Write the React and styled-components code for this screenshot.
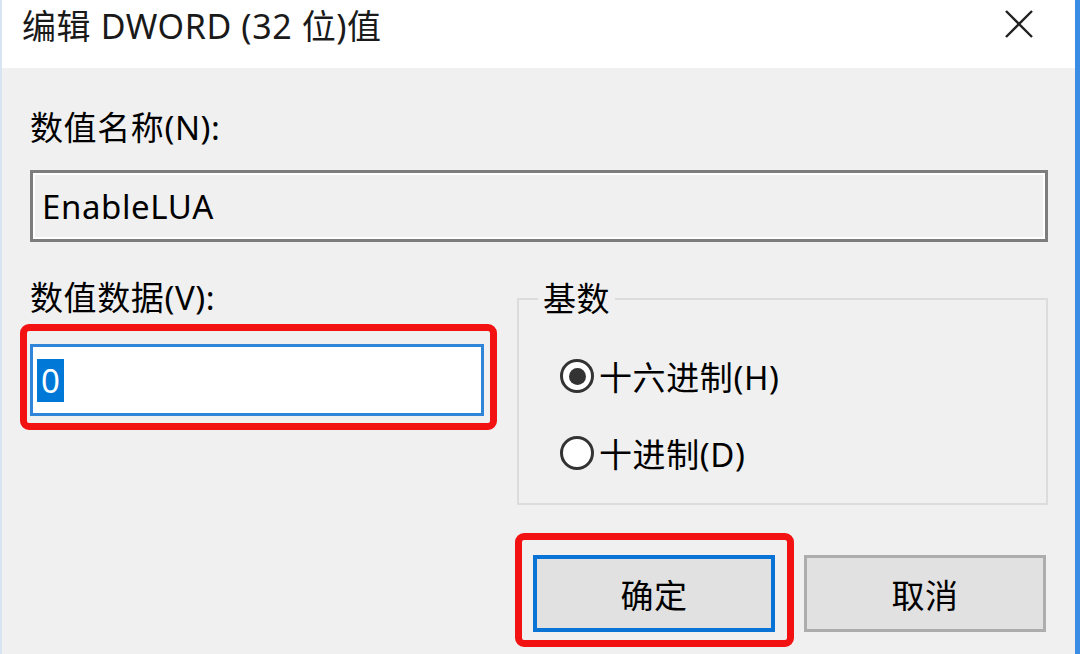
import React from 'react';
import styled, { createGlobalStyle } from 'styled-components';

const GlobalStyle = createGlobalStyle`
  html, body {
    margin: 0;
    padding: 0;
    background: #f0f0f0;
    overflow: hidden;
  }
  * {
    box-sizing: border-box;
  }
`;

const Window = styled.div`
  width: 1080px;
  height: 654px;
  display: flex;
  flex-direction: column;
  border-left: 2px solid #d6e4f3;
  border-right: 5px solid #3a8ce4;
  font-family: "Noto Sans", "Noto Sans CJK SC", sans-serif;
  letter-spacing: 0.6px;
  color: #000;
`;

const TitleBar = styled.div`
  height: 68px;
  flex: none;
  background: #fff;
  display: flex;
  align-items: flex-start;
  justify-content: space-between;
  padding: 5px 42px 0 20px;
`;

const Title = styled.div`
  font-size: 34px;
  line-height: 42px;
  color: #1a1a1a;
`;

const CloseIcon = styled.svg`
  margin-top: 5px;
  width: 28px;
  height: 28px;
`;

const Body = styled.div`
  flex: 1;
  background: #f0f0f0;
  padding: 39px 27px 0 28px;
  display: flex;
  flex-direction: column;
`;

const Label = styled.div`
  font-size: 33px;
  line-height: 41px;
  white-space: nowrap;
`;

const NameBox = styled.div`
  margin-top: 22px;
  height: 72px;
  border: 3px solid #7d7d7d;
  box-shadow: inset 0 0 0 2px #fff;
  background: #f0f0f0;
  display: flex;
  align-items: center;
  padding-left: 9px;
  font-size: 33px;
`;

const Row = styled.div`
  margin-top: 35px;
  display: grid;
  grid-template-columns: 454px 531px;
  column-gap: 33px;
`;

const LeftCol = styled.div`
  display: flex;
  flex-direction: column;
`;

const Highlight = styled.div`
  border: 7px solid #f21212;
  border-radius: 9px;
  padding: ${p => p.$pad};
  margin: ${p => p.$margin};
`;

const ValueInput = styled.div`
  height: 72px;
  border: 3px solid #2f86d8;
  background: #fff;
  display: flex;
  align-items: center;
  padding-left: 4px;
  font-size: 33px;
`;

const Selected = styled.span`
  background: #0078d7;
  color: #fff;
  line-height: 43px;
  padding: 0 4px;
`;

const Group = styled.fieldset`
  margin: 0;
  min-width: 0;
  border: 2px solid #dcdcdc;
  padding: 33px 0 28px 41px;
  display: flex;
  flex-direction: column;
  gap: 33px;
`;

const Legend = styled.legend`
  margin-left: -22px;
  padding: 0 5px;
  font-size: 33px;
  line-height: 44px;
`;

const RadioRow = styled.label`
  display: flex;
  align-items: center;
  height: 44px;
  gap: 5px;
  font-size: 33px;
`;

const RadioCircle = styled.span`
  flex: none;
  width: 34px;
  height: 34px;
  border-radius: 50%;
  border: 3px solid #333;
  background: #fff;
  display: flex;
  align-items: center;
  justify-content: center;

  &::after {
    content: "";
    width: 17px;
    height: 17px;
    border-radius: 50%;
    background: ${p => (p.$checked ? '#333' : 'transparent')};
  }
`;

const ButtonRow = styled.div`
  margin-top: 50px;
  display: flex;
  justify-content: flex-end;
  gap: 29px;
  padding-right: 2px;
`;

const Button = styled.button`
  width: 242px;
  height: 77px;
  background: #e1e1e1;
  border: ${p => (p.$primary ? '4px solid #0a74d6' : '3px solid #adadad')};
  font-family: inherit;
  font-size: 33px;
  letter-spacing: 0.6px;
  color: #000;
  padding: 0;
  display: block;
`;

export default function App() {
  return (
    <>
      <GlobalStyle />
      <Window>
        <TitleBar>
          <Title>编辑 DWORD (32 位)值</Title>
          <CloseIcon viewBox="0 0 28 28">
            <path d="M1 1 L27 27 M27 1 L1 27" stroke="#222" strokeWidth="2.4" fill="none" />
          </CloseIcon>
        </TitleBar>
        <Body>
          <Label>数值名称(N):</Label>
          <NameBox>EnableLUA</NameBox>
          <Row>
            <LeftCol>
              <Label>数值数据(V):</Label>
              <Highlight $pad="13px 6px 7px 3px" $margin="6px -13px -14px -10px">
                <ValueInput>
                  <Selected>0</Selected>
                </ValueInput>
              </Highlight>
            </LeftCol>
            <Group>
              <Legend>基数</Legend>
              <RadioRow>
                <RadioCircle $checked />
                十六进制(H)
              </RadioRow>
              <RadioRow>
                <RadioCircle />
                十进制(D)
              </RadioRow>
            </Group>
          </Row>
          <ButtonRow>
            <Highlight $pad="15px 12px 8px 11px" $margin="-22px -19px -15px -18px">
              <Button $primary>确定</Button>
            </Highlight>
            <Button>取消</Button>
          </ButtonRow>
        </Body>
      </Window>
    </>
  );
}
